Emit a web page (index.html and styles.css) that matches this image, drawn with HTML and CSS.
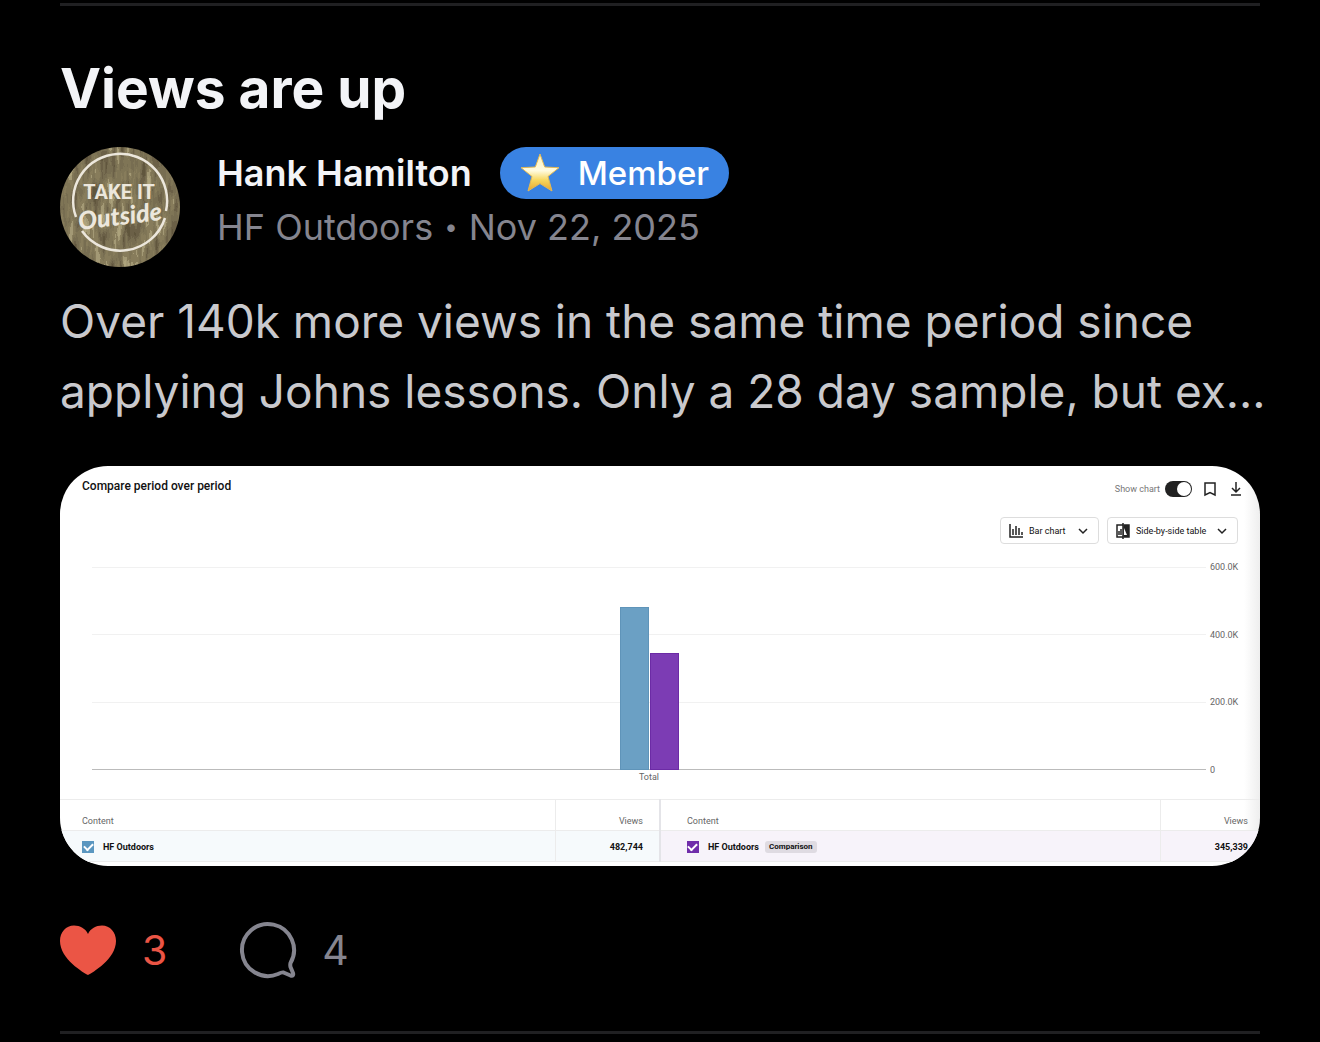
FILE: index.html
```
<!DOCTYPE html>
<html lang="en">
  <head>
    <meta charset="utf-8">
    <title>Views are up</title>
    <meta name="viewport" content="width=device-width, initial-scale=1.0">
    <link rel="stylesheet" href="styles.css">
  </head>
  <body>
    <article class="post">
      <h1 class="post-title">Views are up</h1>
      <header class="author">
        <svg class="avatar" viewBox="0 0 120 120" role="img" aria-label="Take it Outside">
          <defs>
            <clipPath id="round"><circle cx="60" cy="60" r="60"/></clipPath>
            <filter id="bark" x="0" y="0" width="100%" height="100%" color-interpolation-filters="sRGB">
              <feTurbulence type="fractalNoise" baseFrequency="0.15 0.03" numOctaves="3" seed="8"/>
              <feColorMatrix values="1 0 0 0 0  1 0 0 0 0  1 0 0 0 0  0 0 0 0 1"/>
              <feComponentTransfer>
                <feFuncR type="discrete" tableValues=".38 .38 .38 .42 .47 .50 .53 .64 .68 .68 .68"/>
                <feFuncG type="discrete" tableValues=".34 .34 .34 .38 .43 .46 .49 .60 .64 .64 .64"/>
                <feFuncB type="discrete" tableValues=".24 .24 .24 .28 .32 .34 .36 .46 .49 .49 .49"/>
              </feComponentTransfer>
            </filter>
          </defs>
          <g clip-path="url(#round)">
            <rect width="120" height="120" filter="url(#bark)"/>
          </g>
          <path d="M16 70A47 47 0 1 1 106 64M105 71A47 47 0 0 1 22 84" fill="none" stroke="#ece7dc" stroke-width="2.5"/>
          <text class="avatar-top" x="59" y="52" text-anchor="middle">TAKE IT</text>
          <text class="avatar-script" x="60" y="78" text-anchor="middle" transform="rotate(-7 60 70)">Outside</text>
        </svg>
        <div class="author-info">
          <div class="author-line">
            <a class="author-name" href="#">Hank Hamilton</a>
            <span class="badge">
              <svg class="star" viewBox="0 0 40 40" aria-hidden="true">
                <defs>
                  <linearGradient id="gold" x1="0" y1="0" x2="0" y2="1">
                    <stop offset="0" stop-color="#fff3b8"/>
                    <stop offset=".45" stop-color="#fffbe0"/>
                    <stop offset=".7" stop-color="#f7d860"/>
                    <stop offset="1" stop-color="#e9a42c"/>
                  </linearGradient>
                </defs>
                <path d="M20 1L24.700 14L39 14.700L28 23.500L32 38L20 30.600L8 38L12 23.500L1 14.700L15.300 14Z" fill="url(#gold)" stroke="#e3b956" stroke-width="1" stroke-linejoin="round"/>
              </svg>
              Member
            </span>
          </div>
          <div class="meta"><span>HF Outdoors</span><span class="dot">•</span><time datetime="2025-11-22">Nov 22, 2025</time></div>
        </div>
      </header>
      <p class="excerpt">Over 140k more views in the same time period since applying Johns lessons. Only a 28 day sample, but ex...</p>

      <section class="report">
        <div class="report-head">
          <h2 class="report-title">Compare period over period</h2>
          <div class="report-actions">
            <label class="show-chart" for="show-chart">Show chart</label>
            <input class="toggle" type="checkbox" id="show-chart" checked>
            <button class="icon-button" aria-label="Save">
              <svg viewBox="0 0 16 16"><path d="M3 2H13V14L8 11.500L3 14Z"/></svg>
            </button>
            <button class="icon-button" aria-label="Download">
              <svg viewBox="0 0 16 16"><path d="M8 1V11M4 7L8 11L12 7M3 14H13"/></svg>
            </button>
          </div>
        </div>
        <div class="report-filters">
          <div class="picker">
            <svg class="picker-icon" viewBox="0 0 16 16" aria-hidden="true"><path d="M2 1V14H15M5 12V6M8 12V3M11 12V5M14 12V9"/></svg>
            <select class="pick-chart" aria-label="Chart type"><option>Bar chart</option></select>
            <svg class="chevron" viewBox="0 0 12 12" aria-hidden="true"><path d="M2 4L6 8L10 4"/></svg>
          </div>
          <div class="picker">
            <svg class="picker-icon" viewBox="0 0 16 16" aria-hidden="true"><path d="M8 2H2V14H8M8 0V16M4 12V8M6 12V6"/><path d="M9 2H14V14H9Z" fill="#222"/><path class="slice" d="M9 12V5L12 12Z"/></svg>
            <select class="pick-table" aria-label="Table layout"><option>Side-by-side table</option></select>
            <svg class="chevron" viewBox="0 0 12 12" aria-hidden="true"><path d="M2 4L6 8L10 4"/></svg>
          </div>
        </div>

        <div class="chart">
          <div class="lines"><i></i><i></i><i></i></div>
          <div class="bars">
            <div class="bar blue" style="height: 80.5%"></div>
            <div class="bar purple" style="height: 57.6%"></div>
          </div>
          <div class="scale"><span>600.0K</span><span>400.0K</span><span>200.0K</span><span>0</span></div>
          <div class="total">Total</div>
        </div>

        <table class="numbers">
          <colgroup><col class="col-name"><col class="col-views"><col class="col-second"><col class="col-last"></colgroup>
          <tr>
            <th>Content</th>
            <th class="views">Views</th>
            <th class="second">Content</th>
            <th class="views last">Views</th>
          </tr>
          <tr>
            <td class="tint-blue"><label class="item"><input class="check check-blue" type="checkbox" checked>HF Outdoors</label></td>
            <td class="tint-blue views">482,744</td>
            <td class="tint-purple second"><label class="item"><input class="check check-purple" type="checkbox" checked>HF Outdoors <span class="tag">Comparison</span></label></td>
            <td class="tint-purple views last">345,339</td>
          </tr>
        </table>
      </section>

      <footer class="reactions">
        <button class="reaction liked" aria-label="Like">
          <svg viewBox="0 0 56 56"><path d="M28 53C24 51 0 37 0 19C0 10 6 3.500 14 3.500C20 3.500 25.500 6.500 28 12C30.500 6.500 36 3.500 42 3.500C50 3.500 56 10 56 19C56 37 32 51 28 53Z" fill="currentColor"/></svg>
          3
        </button>
        <button class="reaction" aria-label="Comments">
          <svg viewBox="0 0 56 56"><path d="M38 52A26 26 0 1 1 50.500 41Q50 43 50.500 45L53 51Q54 54.500 50.500 53.500L43.500 50.500Q42 50 38 52Z" fill="none" stroke="currentColor" stroke-width="4" stroke-linejoin="round"/></svg>
          4
        </button>
      </footer>
    </article>
  </body>
</html>
```
FILE: styles.css
```
* {
  box-sizing: border-box;
}
body {
  margin: 0;
  padding: 3px 60px 8px;
  background: #000;
  color: #f3f4f7;
  font-family: Inter, "Liberation Sans", sans-serif;
}
button {
  padding: 0;
  border: 0;
  background: none;
  font: inherit;
  color: inherit;
  cursor: pointer;
}
.post {
  padding: 48px 0 53px;
  border-top: 3px solid #202022;
  border-bottom: 3px solid #202022;
}
.post-title {
  margin: 0 0 25px;
  font-size: 55px;
  line-height: 68px;
  font-weight: 700;
}

/* author */
.author {
  display: flex;
  gap: 37px;
}
.avatar {
  width: 120px;
  height: 120px;
  flex: none;
}
.avatar-top {
  font: 700 20px Roboto, sans-serif;
  fill: #ece7dc;
}
.avatar-script {
  font: italic 900 25px Lato, sans-serif;
  fill: #ece7dc;
}
.author-line {
  display: flex;
  align-items: center;
  gap: 28px;
}
.author-name {
  color: #f3f4f7;
  font-size: 36px;
  font-weight: 600;
  line-height: 52px;
  text-decoration: none;
}
.badge {
  display: flex;
  align-items: center;
  gap: 18px;
  height: 52px;
  padding: 0 20px;
  border-radius: 26px;
  background: #3982e2;
  color: #fff;
  font-size: 33px;
  font-weight: 500;
}
.star {
  width: 40px;
  height: 40px;
}
.meta {
  display: flex;
  gap: 11px;
  color: #85858f;
  font-size: 36px;
  line-height: 56px;
}
.dot {
  font-size: 24px;
}
.excerpt {
  margin: 19px -12px 40px 0;
  color: #c9c9cd;
  font-size: 46px;
  line-height: 70px;
}

/* report card */
.report {
  height: 400px;
  overflow: hidden;
  border-radius: 48px;
  background: linear-gradient(to left, #eee, #fff 16px);
  color: #111;
  font-family: Roboto, sans-serif;
  font-size: 9px;
}
.report-head {
  display: flex;
  justify-content: space-between;
  padding: 12px 16px 0 22px;
}
.report-title {
  margin: 0;
  font-size: 12px;
  font-weight: 500;
  line-height: 16px;
}
.report-actions {
  display: flex;
  align-items: center;
  padding-top: 3px;
}
.show-chart {
  color: #777;
  margin-right: 5px;
}
.toggle {
  appearance: none;
  display: flex;
  justify-content: flex-end;
  width: 27px;
  height: 16px;
  margin: 0 10px 0 0;
  padding: 1px;
  border-radius: 8px;
  background: #222;
}
.toggle::before {
  content: "";
  width: 14px;
  height: 14px;
  border-radius: 50%;
  background: #fff;
}
.icon-button {
  width: 16px;
  height: 16px;
  margin-right: 10px;
}
.icon-button:last-child {
  margin-right: 0;
}
.icon-button svg {
  display: block;
}
.report svg {
  fill: none;
  stroke: #222;
  stroke-width: 1.5;
}
.report svg .slice {
  fill: #fff;
  stroke: none;
}
.report-filters {
  display: flex;
  justify-content: flex-end;
  gap: 8px;
  padding: 20px 22px 0 0;
}
.picker {
  display: flex;
  align-items: center;
  height: 27px;
  padding: 0 9px 0 7px;
  border: 1px solid #ddd;
  border-radius: 4px;
}
.picker-icon {
  width: 16px;
  height: 16px;
}
.picker select {
  appearance: none;
  border: 0;
  padding: 0;
  margin: 0 0 0 5px;
  background: none;
  color: #111;
  font: 400 9px Roboto, sans-serif;
}
.picker .pick-chart {
  width: 48px;
}
.picker .pick-table {
  width: 80px;
}
.chevron {
  width: 12px;
  height: 12px;
}

/* chart */
.chart {
  display: grid;
  grid-template-columns: 1fr 50px;
  padding: 18px 0 0 32px;
  color: #666;
  font-size: 9px;
}
.lines,
.bars {
  grid-area: 1 / 1;
  height: 203px;
  margin: 5px 4px 5px 0;
}
.lines {
  display: grid;
  grid-template-rows: repeat(3, 1fr);
  border-bottom: 1px solid #bbb;
}
.lines i {
  border-top: 1px solid #f1f1f1;
}
.bars {
  display: flex;
  justify-content: center;
  align-items: flex-end;
  gap: 1px;
}
.bar {
  width: 29px;
}
.blue {
  background: #6ba0c4;
  border: 1px solid #5f94b9;
}
.purple {
  background: #7c3cb4;
  border: 1px solid #6c2ba5;
}
.scale {
  display: flex;
  flex-direction: column;
  justify-content: space-between;
  line-height: 10px;
}
.total {
  line-height: 12px;
  margin: -4px 4px 0 0;
  text-align: center;
}

/* numbers */
.numbers {
  width: 100%;
  margin-top: 16px;
  border-collapse: collapse;
  table-layout: fixed;
  font-size: 9px;
}
.col-name {
  width: 41.3%;
}
.col-views {
  width: 8.7%;
}
.col-second {
  width: 41.7%;
}
.col-last {
  width: 8.3%;
}
.numbers th,
.numbers td {
  height: 31px;
  padding: 0 0 0 22px;
  border: 1px solid #ececec;
  border-width: 1px 0;
  text-align: left;
}
.numbers th {
  padding-top: 12px;
  color: #666;
  font-weight: 400;
}
.numbers td {
  padding-top: 2px;
  font-weight: 700;
}
.numbers .second {
  padding-left: 26px;
  border-left: 2px solid #e4e4e8;
}
.numbers .views {
  padding-left: 0;
  padding-right: 16px;
  border-left: 1px solid #ececec;
  text-align: right;
}
.numbers .last {
  padding-right: 12px;
}
.tint-blue {
  background: #f6fafc;
}
.tint-purple {
  background: #f7f3fa;
}
.item {
  display: flex;
  align-items: center;
}
.check {
  appearance: none;
  display: grid;
  place-items: center;
  width: 12px;
  height: 12px;
  margin: 0 9px 0 0;
}
.check::before {
  content: "";
  width: 7px;
  height: 4px;
  margin-bottom: 2px;
  border: solid #fff;
  border-width: 0 0 2px 2px;
  rotate: -45deg;
}
.check-blue {
  background: #5b97c0;
}
.check-purple {
  background: #702daa;
}
.tag {
  margin-left: 6px;
  padding: 1px 4px;
  border-radius: 3px;
  background: #dfdbe2;
  font-size: 8px;
  line-height: 10px;
}

/* reactions */
.reactions {
  display: flex;
  gap: 73px;
  margin-top: 56px;
  color: #85858f;
  font-size: 41px;
}
.reaction {
  display: flex;
  align-items: center;
  gap: 26px;
  line-height: 56px;
}
.reaction svg {
  width: 56px;
  height: 56px;
  overflow: visible;
}
.liked {
  color: #eb5545;
}
```
